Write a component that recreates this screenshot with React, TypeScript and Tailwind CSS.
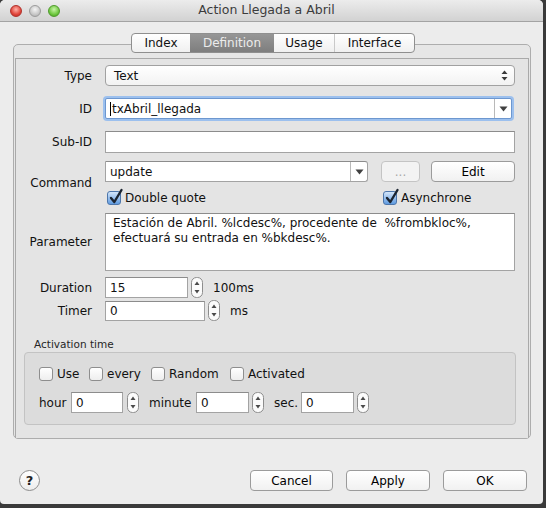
import React from "react";

function Stepper() {
  return (
    <svg width="12" height="21" viewBox="0 0 12 21" className="shrink-0 block">
      <rect x="0.5" y="0.5" width="11" height="20" rx="5" fill="#fbfbfb" stroke="#8d8d8d" />
      <path d="M6 4.5 L8.5 8 L3.5 8 Z" fill="#4a4a4a" />
      <path d="M6 16.5 L8.5 13 L3.5 13 Z" fill="#4a4a4a" />
    </svg>
  );
}

function Check({ checked }: { checked?: boolean }) {
  if (checked) {
    return (
      <span className="relative block w-[14px] h-[14px] shrink-0 rounded-[3px] border border-[#4d76ab] bg-gradient-to-b from-[#d3e5f9] to-[#5f9be0]">
        <svg width="16" height="17" viewBox="0 0 16 17" className="absolute left-[0px] top-[-4px] overflow-visible">
          <path d="M3 10 L6.3 14 L13.5 2" fill="none" stroke="#1b2430" strokeWidth="2.4" strokeLinecap="round" strokeLinejoin="round" />
        </svg>
      </span>
    );
  }
  return <span className="block w-[14px] h-[14px] shrink-0 rounded-[3px] border border-[#8e8e8e] bg-gradient-to-b from-white to-[#eeeeee]" />;
}

function Field({ value, w, h = 21 }: { value?: string; w: string; h?: number }) {
  return (
    <div
      className={`${w} ${h === 20 ? "h-[20px]" : "h-[21px]"} bg-white border border-[#a3a3a3] border-t-[#8c8c8c] flex items-center pl-[4px] shrink-0`}
    >
      {value}
    </div>
  );
}

function Button({ label, w, disabled }: { label: string; w: string; disabled?: boolean }) {
  return (
    <div
      className={`${w} h-[21px] rounded-[4px] border flex items-center justify-center shrink-0 ${
        disabled
          ? "border-[#c4c4c4] bg-[#f3f3f3] text-[#a8a8a8]"
          : "border-[#9b9b9b] bg-gradient-to-b from-white to-[#f1f1f1] text-black"
      }`}
    >
      {label}
    </div>
  );
}

function DownArrow() {
  return (
    <svg width="9" height="6" viewBox="0 0 9 6">
      <path d="M0.5 0.5 L8.5 0.5 L4.5 5.5 Z" fill="#404040" />
    </svg>
  );
}

export default function App() {
  const labels = "w-[76px] text-right shrink-0";
  return (
    <div className="w-[546px] h-[508px] bg-[#3a3a3a] overflow-hidden font-['DejaVu_Sans',sans-serif] text-[12px] text-[#111]">
      <div className="w-[543px] h-[504px] bg-[#ececec] rounded-t-[5px] rounded-b-[4px] flex flex-col">
        {/* title bar */}
        <div className="relative h-[22px] shrink-0 rounded-t-[5px] bg-gradient-to-b from-[#ececec] to-[#d2d2d2] border-b border-[#a3a3a3] flex items-center justify-center">
          <div className="absolute left-[10px] top-[5px] flex gap-[7px]">
            <span className="w-[12px] h-[12px] rounded-full border border-[#b0302a] bg-[radial-gradient(circle_at_50%_35%,#ffb2a8,#e0443a_60%,#b52a22)]" />
            <span className="w-[12px] h-[12px] rounded-full border border-[#9c9c9c] bg-[radial-gradient(circle_at_50%_35%,#f5f5f5,#c8c8c8_60%,#a9a9a9)]" />
            <span className="w-[12px] h-[12px] rounded-full border border-[#4f9a2c] bg-[radial-gradient(circle_at_50%_35%,#c8f5a8,#6fc840_60%,#3f9a1e)]" />
          </div>
          <span className="text-[#3c3c3c] text-[12.5px] -ml-[10px]">Action Llegada a Abril</span>
        </div>

        {/* tabs */}
        <div className="relative z-10 mt-[11px] flex justify-center pl-[3px]">
          <div className="flex h-[20px] rounded-[4px] border border-[#8f8f8f] bg-gradient-to-b from-white to-[#f0f0f0] overflow-hidden">
            <div className="w-[58px] flex items-center justify-center">Index</div>
            <div className="w-[84px] flex items-center justify-center bg-gradient-to-b from-[#969696] to-[#7e7e7e] text-[#ececec]">
              Definition
            </div>
            <div className="w-[61px] flex items-center justify-center border-r border-[#c9c9c9]">Usage</div>
            <div className="w-[79px] flex items-center justify-center">Interface</div>
          </div>
        </div>

        {/* tab box */}
        <div className="-mt-[9px] ml-[13px] w-[518px] h-[395px] rounded-[5px] border border-[#adadad] bg-[#e6e6e6] pt-[13px] px-[1px] flex flex-col">
          <div className="flex-1 border border-[#a9a9a9] border-b-0 bg-[#e4e4e4] pr-[13px] flex flex-col">
            {/* Type */}
            <div className="mt-[6px] flex items-center">
              <span className={labels}>Type</span>
              <div className="ml-[13px] flex-1 h-[21px] rounded-[4px] border border-[#a1a1a1] bg-gradient-to-b from-white to-[#f2f2f2] flex items-center pl-[8px] pr-[6px]">
                <span className="flex-1">Text</span>
                <svg width="7" height="11" viewBox="0 0 7 11">
                  <path d="M3.5 0.5 L6.5 4 L0.5 4 Z" fill="#3a3a3a" />
                  <path d="M3.5 10.5 L6.5 7 L0.5 7 Z" fill="#3a3a3a" />
                </svg>
              </div>
            </div>

            {/* ID */}
            <div className="mt-[12px] flex items-center">
              <span className={labels}>ID</span>
              <div className="ml-[13px] flex-1 mr-[3px] h-[21px] bg-white border border-[#6d97cf] shadow-[0_0_0_2px_#9cc0ee] rounded-[2px] flex items-center">
                <span className="w-[1px] h-[14px] bg-black ml-[4px]" />
                <span className="flex-1 pl-[1px]">txAbril_llegada</span>
                <div className="w-[17px] h-full border-l border-[#b9b9b9] flex items-center justify-center">
                  <DownArrow />
                </div>
              </div>
            </div>

            {/* Sub-ID */}
            <div className="mt-[12px] flex items-center">
              <span className={labels}>Sub-ID</span>
              <div className="ml-[13px] flex-1 h-[22px] bg-white border border-[#a3a3a3] border-t-[#8c8c8c]" />
            </div>

            {/* Command */}
            <div className="mt-[8px] flex items-center">
              <span className={labels}>Command</span>
              <div className="ml-[13px] flex-1 flex flex-col">
                <div className="flex items-center">
                  <div className="w-[263px] h-[21px] bg-white border border-[#a3a3a3] border-t-[#8c8c8c] rounded-r-[3px] flex items-center">
                    <span className="flex-1 pl-[4px]">update</span>
                    <div className="w-[17px] h-full border-l border-[#b9b9b9] flex items-center justify-center">
                      <DownArrow />
                    </div>
                  </div>
                  <div className="ml-[13px]">
                    <Button label="..." w="w-[39px]" disabled />
                  </div>
                  <div className="ml-[11px]">
                    <Button label="Edit" w="w-[84px]" />
                  </div>
                </div>
                <div className="mt-[9px] h-[14px] flex items-center">
                  <span className="ml-[2px]">
                    <Check checked />
                  </span>
                  <span className="ml-[4px]">Double quote</span>
                  <span className="ml-auto w-[132px] flex items-center">
                    <Check checked />
                    <span className="ml-[4px]">Asynchrone</span>
                  </span>
                </div>
              </div>
            </div>

            {/* Parameter */}
            <div className="mt-[8px] flex items-center">
              <span className={labels}>Parameter</span>
              <div className="ml-[13px] flex-1 h-[58px] bg-white border border-[#a3a3a3] border-t-[#8c8c8c] pl-[7px] pt-[2px] leading-[15px]">
                Estación de Abril. %lcdesc%, procedente de&nbsp; %frombkloc%,
                <br />
                efectuará su entrada en %bkdesc%.
              </div>
            </div>

            {/* Duration */}
            <div className="mt-[6px] flex items-center">
              <span className={labels}>Duration</span>
              <div className="ml-[13px] flex items-center">
                <Field value="15" w="w-[83px]" />
                <span className="ml-[3px]">
                  <Stepper />
                </span>
                <span className="ml-[10px]">100ms</span>
              </div>
            </div>

            {/* Timer */}
            <div className="mt-[2px] flex items-center">
              <span className={labels}>Timer</span>
              <div className="ml-[13px] flex items-center">
                <Field value="0" w="w-[100px]" h={20} />
                <span className="ml-[3px]">
                  <Stepper />
                </span>
                <span className="ml-[10px]">ms</span>
              </div>
            </div>

            {/* Activation time */}
            <div className="mt-[17px] ml-[18px] h-[13px] text-[10.5px] leading-[13px] text-[#262626]">Activation time</div>
            <div className="mt-[1px] ml-[8px] w-[492px] h-[73px] rounded-[4px] border border-[#c3c3c3] bg-[#dcdcdc] pt-[14px] pl-[14px] flex flex-col">
              <div className="h-[14px] flex items-center">
                <span className="w-[50px] flex items-center">
                  <Check />
                  <span className="ml-[4px]">Use</span>
                </span>
                <span className="w-[62px] flex items-center">
                  <Check />
                  <span className="ml-[4px]">every</span>
                </span>
                <span className="w-[79px] flex items-center">
                  <Check />
                  <span className="ml-[4px]">Random</span>
                </span>
                <span className="flex items-center">
                  <Check />
                  <span className="ml-[4px]">Activated</span>
                </span>
              </div>
              <div className="mt-[11px] flex items-center">
                <span className="w-[32px]">hour</span>
                <Field value="0" w="w-[52px]" />
                <span className="ml-[4px]">
                  <Stepper />
                </span>
                <span className="ml-[10px] w-[47px]">minute</span>
                <Field value="0" w="w-[53px]" />
                <span className="ml-[3px]">
                  <Stepper />
                </span>
                <span className="ml-[10px] w-[27px]">sec.</span>
                <Field value="0" w="w-[53px]" />
                <span className="ml-[3px]">
                  <Stepper />
                </span>
              </div>
            </div>
          </div>
        </div>

        {/* bottom buttons */}
        <div className="mt-[31px] flex items-center pl-[19px] pr-[16px]">
          <div className="w-[21px] h-[21px] rounded-full border border-[#8d8d8d] bg-gradient-to-b from-white to-[#ededed] flex items-center justify-center font-bold text-[13px] text-[#222]">
            ?
          </div>
          <div className="ml-auto flex items-center gap-[13px]">
            <Button label="Cancel" w="w-[83px]" />
            <Button label="Apply" w="w-[84px]" />
            <Button label="OK" w="w-[84px]" />
          </div>
        </div>
      </div>
    </div>
  );
}
